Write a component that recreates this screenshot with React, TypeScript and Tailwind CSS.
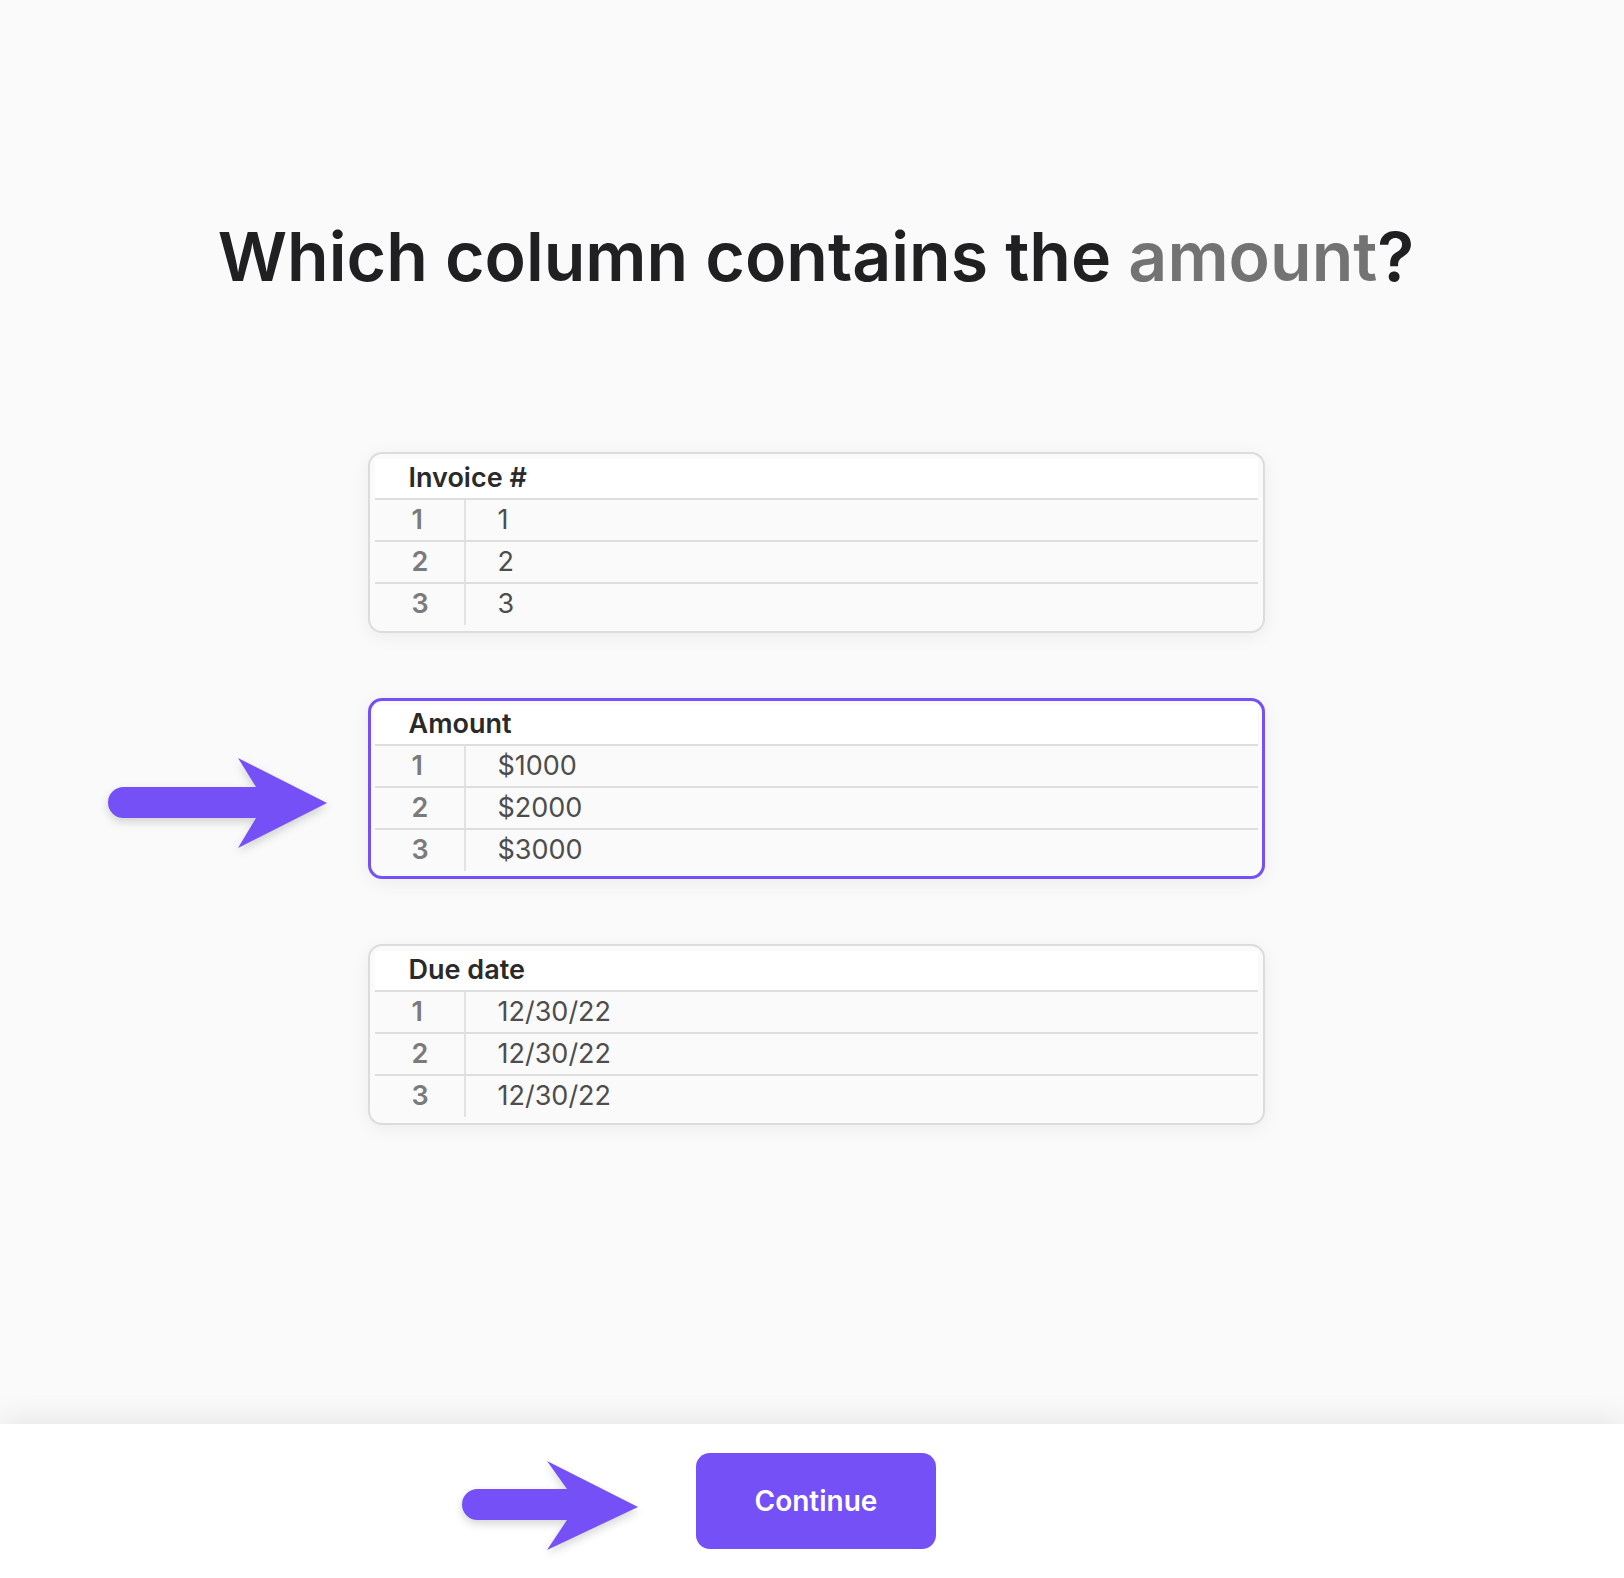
import React from 'react';

type Column = {
  title: string;
  values: string[];
  selected?: boolean;
};

const columns: Column[] = [
  { title: 'Invoice #', values: ['1', '2', '3'] },
  { title: 'Amount', values: ['$1000', '$2000', '$3000'], selected: true },
  { title: 'Due date', values: ['12/30/22', '12/30/22', '12/30/22'] },
];

function Arrow({ width, height, shaftTop, shaftBottom, notch, back, tipY }: {
  width: number;
  height: number;
  shaftTop: number;
  shaftBottom: number;
  notch: number;
  back: number;
  tipY: number;
}) {
  const r = (shaftBottom - shaftTop) / 2;
  const d = `M${r} ${shaftTop} H${notch} L${back} 0 L${width} ${tipY} L${back} ${height} L${notch} ${shaftBottom} H${r} A${r} ${r} 0 0 1 ${r} ${shaftTop} Z`;
  return (
    <svg
      width={width}
      height={height}
      viewBox={`0 0 ${width} ${height}`}
      className="drop-shadow-[0_4px_4px_rgba(0,0,0,0.16)]"
    >
      <path d={d} fill="#7450f6" />
    </svg>
  );
}

function ColumnCard({ column }: { column: Column }) {
  return (
    <div
      className={`relative rounded-[14px] bg-[#fafafa] shadow-[0_4px_18px_rgba(0,0,0,0.06)] ${
        column.selected ? 'border-[3px] border-[#7450f6] p-[4px] pb-[5px]' : 'border-2 border-[#dcdcdc] p-[5px] pb-[6px]'
      }`}
    >
      {column.selected && (
        <div className="absolute left-[-263px] top-[57px]">
          <Arrow width={219} height={90} shaftTop={29} shaftBottom={60} notch={148} back={130} tipY={45} />
        </div>
      )}
      <div className="flex h-[41px] items-center border-b-2 border-[#dedede] bg-white pl-[34px] text-[27px] font-semibold text-[#2a2a2a]">
        {column.title}
      </div>
      {column.values.map((value, i) => (
        <div
          key={i}
          className={`flex items-center text-[27px] ${i < 2 ? 'h-[42px] border-b-2 border-[#dedede]' : 'h-[41px]'}`}
        >
          <div className="flex h-full w-[91px] items-center border-r-2 border-[#e2e2e2] pl-[37px] font-semibold text-[#7b7b7b]">
            {i + 1}
          </div>
          <div className="pl-[32px] text-[#4d4d4d]">{value}</div>
        </div>
      ))}
    </div>
  );
}

export default function App() {
  return (
    <div className="flex min-h-screen flex-col bg-[#fafafa] font-['Inter','Noto_Sans',sans-serif]">
      <main className="flex h-[1424px] flex-col items-center pl-2">
        <h1 className="mt-[222px] text-[68px] font-semibold leading-none text-[#202022]">
          Which column contains the <span className="text-[#737373]">amount</span>?
        </h1>
        <div className="mt-[162px] flex w-[897px] flex-col gap-[65px]">
          {columns.map((column) => (
            <ColumnCard key={column.title} column={column} />
          ))}
        </div>
      </main>
      <footer className="relative flex h-[154px] items-center justify-center bg-white pl-2 shadow-[0_-8px_26px_rgba(0,0,0,0.07)]">
        <div className="relative">
          <div className="absolute left-[-234px] top-[8px]">
            <Arrow width={176} height={89} shaftTop={28} shaftBottom={59} notch={105} back={85} tipY={46} />
          </div>
          <button
            type="button"
            className="flex h-[96px] w-[240px] items-center justify-center rounded-[14px] bg-[#7450f6] text-[28px] font-semibold text-white"
          >
            Continue
          </button>
        </div>
      </footer>
    </div>
  );
}
